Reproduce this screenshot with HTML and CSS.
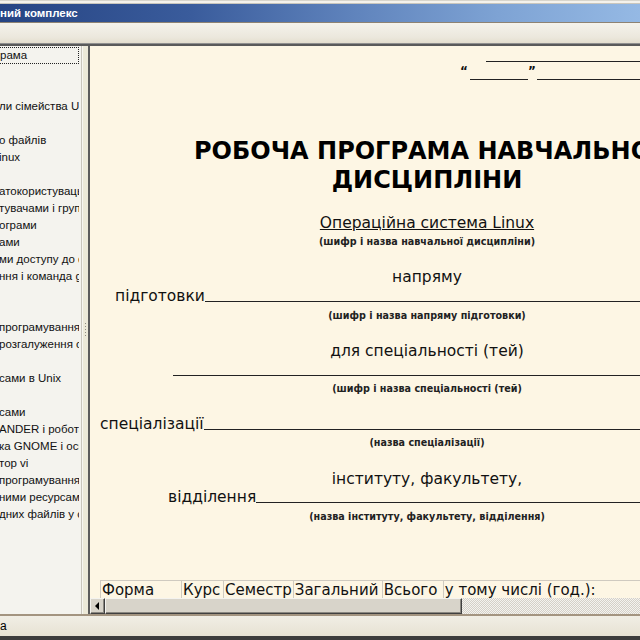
FILE: index.html
```html
<!DOCTYPE html>
<html lang="uk">
<head>
<meta charset="utf-8">
<title>Навчальний комплекс</title>
<link rel="stylesheet" href="styles.css">
</head>
<body>
<div class="window">
  <div class="frame-top"></div>
  <div class="titlebar"><span class="title">ний комплекс</span></div>
  <div class="toolbar"></div>
  <div class="workspace">
    <div class="tree">
      <div class="row focus">рама</div>
      <div class="row"></div>
      <div class="row"></div>
      <div class="row">ли сімейства Unix</div>
      <div class="row"></div>
      <div class="row">о файлів</div>
      <div class="row">inux</div>
      <div class="row"></div>
      <div class="row">атокористувацьк</div>
      <div class="row">тувачами і група</div>
      <div class="row">ограми</div>
      <div class="row">ами</div>
      <div class="row">ми доступу до ф</div>
      <div class="row">ння і команда g</div>
      <div class="row"></div>
      <div class="row"></div>
      <div class="row">програмування</div>
      <div class="row">розгалуження о</div>
      <div class="row"></div>
      <div class="row">сами в Unix</div>
      <div class="row"></div>
      <div class="row">сами</div>
      <div class="row">ANDER і робота з</div>
      <div class="row">ка GNOME і осно</div>
      <div class="row">тор vi</div>
      <div class="row">програмування</div>
      <div class="row">ними ресурсами</div>
      <div class="row">дних файлів у с</div>
    </div>
    <div class="splitter"><span class="grip"></span></div>
    <div class="viewer">
      <div class="doc">
        <div class="page">
          <div class="sig-top"></div>
          <div class="sig-date"><span class="q">“</span><span class="blank-short"></span><span class="q">”</span><span class="blank-long"></span></div>
          <h1 class="title-doc">РОБОЧА ПРОГРАМА НАВЧАЛЬНОЇ<br>ДИСЦИПЛІНИ</h1>
          <div class="subject">Операційна система Linux</div>
          <div class="caption cap-1">(шифр і назва навчальної дисципліни)</div>
          <div class="center-line cl-1">напряму</div>
          <div class="field-row fr-1"><span>підготовки</span><span class="fill"></span></div>
          <div class="caption cap-2">(шифр і назва напряму підготовки)</div>
          <div class="center-line cl-2">для спеціальності (тей)</div>
          <div class="fill-line"></div>
          <div class="caption cap-3">(шифр і назва спеціальності (тей)</div>
          <div class="field-row fr-2"><span>спеціалізації</span><span class="fill"></span></div>
          <div class="caption cap-4">(назва спеціалізації)</div>
          <div class="center-line cl-3">інституту, факультету,</div>
          <div class="field-row fr-3"><span>відділення</span><span class="fill"></span></div>
          <div class="caption cap-5">(назва інституту, факультету, відділення)</div>
          <table class="plan">
            <tr>
              <td class="c1">Форма</td>
              <td class="c2">Курс</td>
              <td class="c3">Семестр</td>
              <td class="c4">Загальний</td>
              <td class="c5">Всього</td>
              <td class="c6">у тому числі (год.):</td>
            </tr>
            <tr>
              <td>навчання</td><td></td><td></td><td>обсяг</td><td>ауд.</td><td></td>
            </tr>
          </table>
        </div>
      </div>
      <div class="hscroll">
        <span class="btn-left"><span class="arrow"></span></span>
        <span class="thumb"></span>
        <span class="track"></span>
      </div>
    </div>
  </div>
  <div class="statusbar">а</div>
  <div class="frame-bottom"></div>
</div>
</body>
</html>
```
FILE: styles.css
```css
html, body {
  margin: 0;
  padding: 0;
}
body {
  width: 640px;
  height: 640px;
  overflow: hidden;
  background: #ece9d8;
}
.window {
  display: flex;
  flex-direction: column;
  width: 640px;
  height: 640px;
}
.frame-top {
  height: 4px;
  background: linear-gradient(#d8d5cc 0 1px, #f4f2ec 1px 3px, #c9c6bd 3px);
}
.titlebar {
  height: 18px;
  background: linear-gradient(90deg, #264483 0%, #3a5c9c 30%, #5f83bc 55%, #7ea3d4 78%, #95b9e4 100%);
  display: flex;
  align-items: center;
}
.title {
  font-family: "Liberation Sans", Arial, sans-serif;
  font-weight: bold;
  font-size: 11.5px;
  color: #fff;
  white-space: nowrap;
}
.toolbar {
  height: 21px;
  border-top: 1px solid #8e8373;
  border-bottom: 2px solid #5a5a5a;
  background: linear-gradient(#f5f3ec, #ebe7dc 70%, #e2dccb);
  box-shadow: inset 0 -1px #8f8f8f;
}
.workspace {
  height: 568px;
  display: flex;
}
.tree {
  width: 81px;
  border-right: 1px solid #c9c6bc;
  background: #f4f3ee;
  padding-top: 1px;
  overflow: hidden;
  font-family: "Liberation Sans", Arial, sans-serif;
  font-size: 11.5px;
  color: #111;
}
.row {
  height: 17px;
  line-height: 16px;
  white-space: nowrap;
  overflow: hidden;
  width: 80px;
  box-sizing: border-box;
  margin-left: -1px;
}
.row.focus {
  border: 1px dotted #222;
  line-height: 14px;
}
.splitter {
  width: 6px;
  background: linear-gradient(90deg, #f7f6f1 0 1px, #ece9d8 1px);
  display: flex;
  align-items: center;
  justify-content: center;
}
.grip {
  width: 1px;
  height: 15px;
  background: repeating-linear-gradient(#8f8c82 0 1px, transparent 1px 3px);
}
.viewer {
  flex: 1;
  display: flex;
  flex-direction: column;
  border-left: 2px solid #5c5c5c;
  min-width: 0;
}
.doc {
  flex: 1;
  overflow: hidden;
  background: #fdf6e4;
}
.page {
  width: 674px;
  font-family: "DejaVu Sans", Verdana, sans-serif;
  font-size: 15.5px;
  color: #111;
}
.sig-top {
  margin-left: 396px;
  height: 15px;
  border-bottom: 1px solid #222;
}
.sig-date {
  display: flex;
  align-items: flex-end;
  height: 18px;
  margin-left: 370px;
  font-size: 12px;
  font-weight: bold;
  line-height: 12px;
}
.q {
  margin-bottom: 3px;
}
.blank-short {
  width: 58px;
  margin: 0 0 0 2px;
  border-bottom: 1px solid #222;
}
.blank-long {
  flex: 1;
  margin-left: 1px;
  border-bottom: 1px solid #222;
}
.title-doc {
  margin: 57px 0 0;
  font-size: 24px;
  line-height: 29px;
  font-weight: bold;
  text-align: center;
  color: #000;
}
.subject {
  margin-top: 19px;
  line-height: 18px;
  text-align: center;
  text-decoration: underline;
}
.caption {
  font-size: 9.6px;
  font-weight: bold;
  line-height: 12px;
  text-align: center;
  color: #222;
}
.cap-1 { margin-top: 4px; }
.cap-2 { margin-top: 4px; }
.cap-3 { margin-top: 7px; }
.cap-4 { margin-top: 3px; }
.cap-5 { margin-top: 4px; }
.center-line {
  line-height: 19px;
  text-align: center;
}
.cl-1 { margin-top: 20px; }
.cl-2 { margin-top: 20px; }
.cl-3 { margin-top: 21px; }
.field-row {
  display: flex;
  align-items: flex-end;
  line-height: 19px;
  white-space: nowrap;
}
.fill {
  flex: 1;
  margin-bottom: 4px;
  border-bottom: 1px solid #222;
}
.fr-1 { padding-left: 25px; }
.fr-2 { padding-left: 10px; margin-top: 20px; }
.fr-3 { padding-left: 78px; margin-top: -1px; }
.fill-line {
  margin-left: 83px;
  width: 508px;
  height: 14px;
  border-bottom: 1px solid #222;
}
.plan {
  margin: 57px 0 0 10px;
  border-collapse: collapse;
  font-size: 15px;
  line-height: 19px;
}
.plan td {
  border: 1px solid #cfcac0;
  padding: 0 1px;
  vertical-align: top;
  white-space: nowrap;
}
.c1 { width: 78px; }
.c2 { width: 39px; }
.c3 { width: 66px; }
.c4 { width: 86px; }
.c5 { width: 58px; }
.c6 { width: 220px; }
.hscroll {
  height: 16px;
  display: flex;
  background: #d4d0c8;
}
.btn-left, .thumb {
  box-sizing: border-box;
  height: 16px;
  background: #d8d4ca;
  border: 1px solid;
  border-color: #f4f3ef #404040 #404040 #f4f3ef;
  box-shadow: inset -1px -1px #8a8780;
}
.btn-left {
  width: 15px;
  display: flex;
  align-items: center;
  justify-content: center;
}
.arrow {
  width: 0;
  height: 0;
  border-top: 4px solid transparent;
  border-bottom: 4px solid transparent;
  border-right: 4px solid #000;
  margin-left: -2px;
}
.thumb {
  width: 357px;
}
.track {
  flex: 1;
  background: repeating-conic-gradient(#d4d0c8 0 25%, #f4f3ef 0 50%) 0 0 / 2px 2px;
}
.statusbar {
  height: 20px;
  border-top: 2px solid #a39480;
  background: linear-gradient(#f1eee5, #e7e2d3);
  font-family: "Liberation Sans", Arial, sans-serif;
  font-size: 12px;
  line-height: 20px;
  color: #000;
  white-space: nowrap;
}
.frame-bottom {
  height: 4px;
  background: #3c3c3c;
}
```
